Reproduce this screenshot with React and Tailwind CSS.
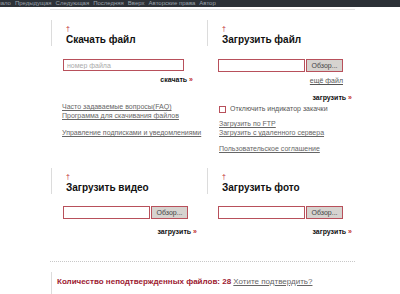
import React from 'react';

function SectionHead({ title }) {
  return (
    <div className="h-[26px] border-l border-[#dcdcdc] pl-[14px] pt-[5px]">
      <div className="h-[7px] text-[7px] leading-[7px] text-[#c0282d]">†</div>
      <div className="mt-[2px] text-[10px] font-bold leading-[12px] text-[#111]">{title}</div>
    </div>
  );
}

function FileField({ inputWidth }) {
  return (
    <div className="flex">
      <div className={`h-[13px] ${inputWidth} border border-[#b8505b] bg-white`} />
      <button className="ml-px h-[13px] w-[37px] border border-[#b8505b] bg-[#d6d3cf] text-[7px] leading-[11px] text-[#444]">
        Обзор...
      </button>
    </div>
  );
}

function Action({ label, width }) {
  return (
    <div className={`${width} text-right text-[7px] font-bold leading-[8px] text-[#111]`}>
      {label} <span className="text-[#c0282d]">»</span>
    </div>
  );
}

function LinkText({ children }) {
  return <div className="text-[7px] leading-[9px] text-[#666] underline">{children}</div>;
}

export default function App() {
  return (
    <div className="h-[294px] w-[400px] overflow-hidden bg-white" style={{ fontFamily: '"Liberation Sans", Arial, sans-serif' }}>
      <div className="h-[7px] overflow-hidden whitespace-nowrap bg-[#2c3137] text-[6px] leading-[7px] text-[#9ba2ab]">
        <span className="-ml-[10px] inline-block space-x-[4px]">
          <span>Начало</span>
          <span>Предыдущая</span>
          <span>Следующая</span>
          <span>Последняя</span>
          <span>Вверх</span>
          <span>Авторские права</span>
          <span>Автор</span>
        </span>
      </div>
      <div className="ml-[50px] mt-[2px] w-[305px] border-t border-[#e2e2e2]" />

      <div className="ml-[51px] mt-[10px] flex h-[148px]">
        <div className="w-[156px]">
          <SectionHead title="Скачать файл" />
          <input
            placeholder="номер файла"
            className="ml-[12px] mt-[13px] block h-[12px] w-[121px] border border-[#b8505b] px-[3px] text-[7px] placeholder:text-[#aaa] outline-none"
          />
          <div className="mt-[5px]">
            <Action label="скачать" width="w-[142px]" />
          </div>
          <div className="ml-[11px] mt-[18px]">
            <LinkText>Часто задаваемые вопросы(FAQ)</LinkText>
            <LinkText>Программа для скачивания файлов</LinkText>
            <div className="mt-[8px]">
              <LinkText>Управление подписками и уведомлениями</LinkText>
            </div>
          </div>
        </div>

        <div className="w-[150px]">
          <SectionHead title="Загрузить файл" />
          <div className="ml-[11px] mt-[13px]">
            <FileField inputWidth="w-[87px]" />
          </div>
          <div className="mt-[5px] w-[136px] text-right text-[7px] leading-[8px] text-[#555] underline">ещё файл</div>
          <div className="mt-[9px]">
            <Action label="загрузить" width="w-[145px]" />
          </div>
          <div className="ml-[12px] mt-[3px] flex items-center">
            <div className="h-[7px] w-[7px] border border-[#b8505b] bg-white" />
            <span className="ml-[4px] text-[7px] leading-[8px] text-[#555]">Отключить индикатор закачки</span>
          </div>
          <div className="ml-[12px] mt-[6px]">
            <LinkText>Загрузить по FTP</LinkText>
            <LinkText>Загрузить с удаленного сервера</LinkText>
            <div className="mt-[7px]">
              <LinkText>Пользовательское соглашение</LinkText>
            </div>
          </div>
        </div>
      </div>

      <div className="ml-[51px] flex">
        <div className="w-[156px]">
          <SectionHead title="Загрузить видео" />
          <div className="ml-[12px] mt-[12px]">
            <FileField inputWidth="w-[87px]" />
          </div>
          <div className="mt-[9px]">
            <Action label="загрузить" width="w-[146px]" />
          </div>
        </div>
        <div className="w-[150px]">
          <SectionHead title="Загрузить фото" />
          <div className="ml-[11px] mt-[12px]">
            <FileField inputWidth="w-[87px]" />
          </div>
          <div className="mt-[9px]">
            <Action label="загрузить" width="w-[145px]" />
          </div>
        </div>
      </div>

      <div className="ml-[50px] mt-[25px] w-[305px] border-t border-dotted border-[#c8c8c8]" />

      <div className="ml-[51px] mt-[10px] h-[24px] border-l border-[#dcdcdc] pl-[5px] pt-[5px] text-[8px] leading-[10px]">
        <span className="font-bold text-[#9c1a31]">Количество неподтвержденных файлов: 28</span>{' '}
        <span className="text-[#666] underline">Хотите подтвердить?</span>
      </div>
    </div>
  );
}
